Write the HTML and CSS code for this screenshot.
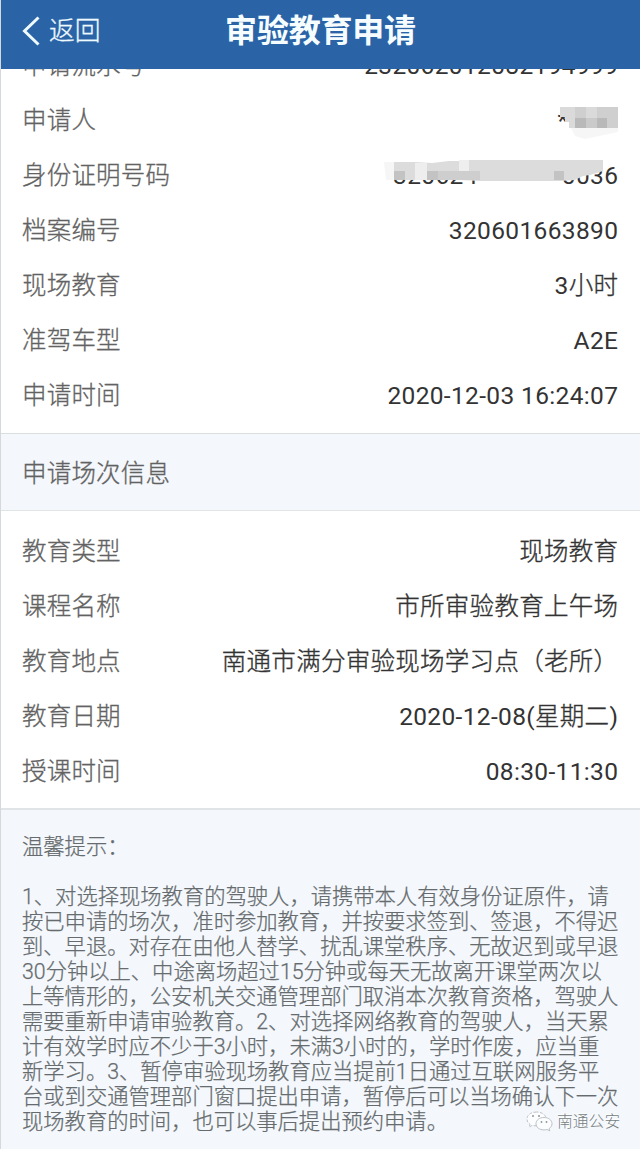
FILE: index.html
```html
<!DOCTYPE html>
<html lang="zh-CN">
<head>
<meta charset="utf-8">
<title>审验教育申请</title>
<link rel="stylesheet" href="styles.css">
</head>
<body>
<div class="app">
  <header class="bar">
    <a class="back"><svg width="20" height="32" viewBox="0 0 20 32"><path d="M17.500 2.500 3.500 16l14 13.500" fill="none" stroke="#effaff" stroke-width="3"/></svg><span>返回</span></a>
    <h1 class="title">审验教育申请</h1>
  </header>
  <section class="list list-top">
    <div class="row"><span class="label">申请流水号</span><span class="value">232062012082194999</span></div>
    <div class="row"><span class="label">申请人</span><span class="value person">*
      <svg class="mask mask-name" width="64" height="34" viewBox="0 0 64 34"><path d="M5 1h58v21H14v-6h-4v-5H5z" fill="#dadada"/><path d="M20 1h11v11H20zM42 1h21v21H42z" fill="#cfcfcf"/><path d="M20 12h11v10H20zM42 12h10v10H42z" fill="#b9b9b9"/><path d="M31 12h11v10H31z" fill="#cacaca"/><path d="M16 22h47v4l-33 7-10-3z" fill="#f6f6f6"/></svg></span></div>
    <div class="row"><span class="label">身份证明号码</span><span class="value identity"><span>320624</span><span>0036</span>
      <svg class="mask mask-id" width="224" height="34" viewBox="0 0 224 34"><path d="M0 2h12v18H2z" fill="#f6f6f6"/><path d="M10 2h21l17 1 17-2h10V0h144v11l-13 4-7 1-8 4-15 1H96l-20-1H10z" fill="#dcdcdc"/><path d="M10 11h11v9H10zM43 11h11v9H43zM170 11h10v9h-10z" fill="#c3c3c3"/><path d="M54 11h42v9H54z" fill="#cecece"/><path d="M31 3h12v17H31zM75 0h10v11H75z" fill="#eee"/></svg></span></div>
    <div class="row"><span class="label">档案编号</span><span class="value">320601663890</span></div>
    <div class="row"><span class="label">现场教育</span><span class="value">3<span class="han">小时</span></span></div>
    <div class="row"><span class="label">准驾车型</span><span class="value">A2E</span></div>
    <div class="row"><span class="label">申请时间</span><span class="value">2020-12-03 16:24:07</span></div>
  </section>
  <h2 class="section-title">申请场次信息</h2>
  <section class="list list-session">
    <div class="row"><span class="label">教育类型</span><span class="value han">现场教育</span></div>
    <div class="row"><span class="label">课程名称</span><span class="value han">市所审验教育上午场</span></div>
    <div class="row"><span class="label">教育地点</span><span class="value han">南通市满分审验现场学习点（老所）</span></div>
    <div class="row"><span class="label">教育日期</span><span class="value">2020-12-08(<span class="han">星期二</span>)</span></div>
    <div class="row"><span class="label">授课时间</span><span class="value">08:30-11:30</span></div>
  </section>
  <section class="tips">
    <p class="tips-title">温馨提示：</p>
    <p class="tips-body">1、对选择现场教育的驾驶人，请携带本人有效身份证原件，请<br>按已申请的场次，准时参加教育，并按要求签到、签退，不得迟<br>到、早退。对存在由他人替学、扰乱课堂秩序、无故迟到或早退<br>30分钟以上、中途离场超过15分钟或每天无故离开课堂两次以<br>上等情形的，公安机关交通管理部门取消本次教育资格，驾驶人<br>需要重新申请审验教育。2、对选择网络教育的驾驶人，当天累<br>计有效学时应不少于3小时，未满3小时的，学时作废，应当重<br>新学习。3、暂停审验现场教育应当提前1日通过互联网服务平<br>台或到交通管理部门窗口提出申请，暂停后可以当场确认下一次<br>现场教育的时间，也可以事后提出预约申请。</p>
    <div class="watermark"><svg width="27" height="21" viewBox="0 0 27 21"><g fill="#fbfdff" stroke="#b5babd" stroke-width=".9"><path d="M10.500 1C5 1 1 4 1 8c0 2.300 1.200 4 3 5.300L3.200 16l3.300-1.700c1.300.4 2.600.6 4 .6 5.500 0 9.500-3 9.500-7S16 1 10.500 1z" stroke-dasharray="3 1.500"/><path d="M18 6.500c-4.700 0-8 2.700-8 6.200s3.300 6.200 8 6.200c1 0 2-.1 3-.4l2.800 1.400-.7-2.300c1.800-1.200 2.900-2.900 2.900-4.900 0-3.500-3.300-6.200-8-6.200z"/></g><g fill="#8f9698"><circle cx="7" cy="5" r="1"/><circle cx="13" cy="5" r="1"/><circle cx="15.500" cy="11" r=".9"/><circle cx="20.500" cy="11" r=".9"/></g></svg><span>南通公安</span></div>
  </section>
</div>
</body>
</html>
```
FILE: styles.css
```css
* { box-sizing: border-box; }
body { margin: 0; background: #fff; font-family: Roboto, "Noto Sans CJK SC", sans-serif; }
.app { width: 640px; height: 1149px; overflow: hidden; display: flex; flex-direction: column; border-left: 1px solid #d5d9db; }
.bar { position: relative; z-index: 1; flex: 0 0 69px; display: grid; grid-template-columns: 200px 1fr 200px; align-items: center; margin-left: -1px; padding-bottom: 7px; background: #2a64a7; color: #effaff; border-left: 1px solid #5382b8; }
.back { display: flex; align-items: center; gap: 8px; padding-left: 20px; font-size: 25.8px; font-weight: 300; line-height: 36px; -webkit-text-stroke: .3px; }
.title { margin: 0; text-align: center; font-size: 32px; font-weight: 700; line-height: 44px; letter-spacing: -.2px; white-space: nowrap; color: #f6fdff; }
.list { flex: none; padding: 0 22px 0 21px; background: #fff; }
.list-top { margin-top: -31px; height: 395px; }
.list-session { height: 297px; padding-top: 13px; }
.row { display: flex; justify-content: space-between; height: 55px; line-height: 55px; font-size: 24.5px; white-space: nowrap; }
.label { color: #626262; font-weight: 300; letter-spacing: .2px; -webkit-text-stroke: .3px; }
.value { color: #333; font-weight: 400; margin-right: -.3px; letter-spacing: .35px; }
.han { font-weight: 300; letter-spacing: .28px; -webkit-text-stroke: .35px; }
.person, .identity { position: relative; }
.person { padding-right: 50px; }
.identity { display: flex; gap: 84px; }
.mask { position: absolute; }
.mask-name { right: -1px; top: 13px; }
.mask-id { right: 10px; top: 12px; }
.section-title { flex: none; height: 78px; margin: 0; padding-left: 21px; border-top: 1px solid #d9dee1; border-bottom: 1px solid #dfe4e5; background: #f4f7fb; color: #626262; font-size: 24.5px; font-weight: 300; line-height: 80px; letter-spacing: .2px; -webkit-text-stroke: .3px; }
.tips { flex: 1; padding: 24px 0 0 21px; border-top: 2px solid #e1e4e6; background: #f4f8fc; color: #666b6e; font-size: 21.3px; font-weight: 300; line-height: 25px; -webkit-text-stroke: .25px; }
.tips p { margin: 0; white-space: nowrap; }
.tips .tips-body { margin-top: 25px; }
.watermark { display: flex; align-items: center; gap: 4px; margin: -26px 0 0 504px; height: 26px; font-size: 15.8px; color: #777f83; text-shadow: -1px -1px 0 #fff; white-space: nowrap; -webkit-text-stroke: 0; }
```
